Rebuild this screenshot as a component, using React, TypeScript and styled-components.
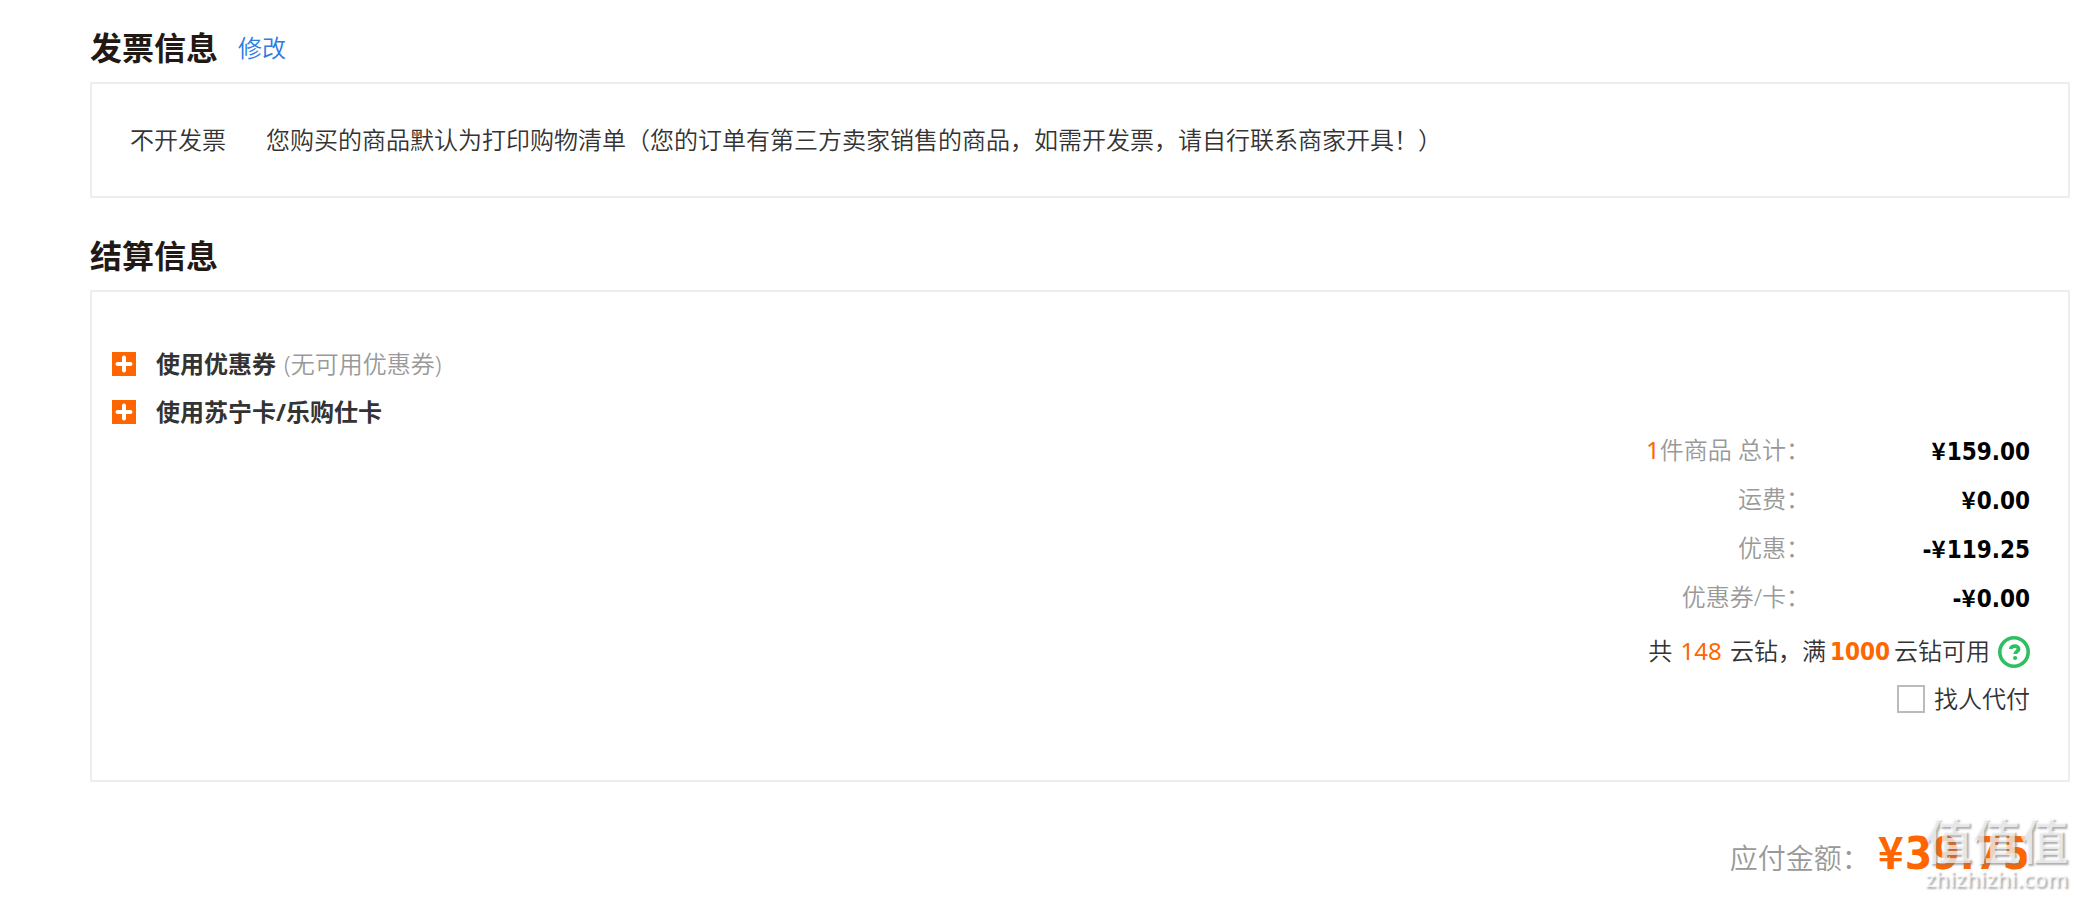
import React from "react";
import styled, { createGlobalStyle } from "styled-components";

const cjk = `"Noto Sans CJK SC", sans-serif`;
const body = `"Noto Sans", "Noto Sans CJK SC", sans-serif`;
const numeric = `"DejaVu Sans Condensed", "DejaVu Sans", "Noto Sans CJK SC", sans-serif`;

const Global = createGlobalStyle`
  *, *::before, *::after { box-sizing: border-box; }
  body {
    margin: 0;
    background: #fff;
    color: #333;
    font: 350 24px/48px ${body};
  }
`;

const Page = styled.main`
  padding: 16px 7px 0 90px;
`;

const SectionHead = styled.header`
  display: flex;
  align-items: center;
  gap: 20px;
  height: 64px;
`;

const Title = styled.h2`
  margin: 0;
  font-size: 32px;
  font-weight: 700;
  color: #221814;
`;

const EditLink = styled.a`
  color: #2e7ae6;
  text-decoration: none;
`;

const Panel = styled.section`
  border: 2px solid #ededed;
`;

const InvoicePanel = styled(Panel)`
  display: flex;
  gap: 40px;
  padding: 32px 38px;
  margin: 2px 0 26px;
`;

const SettlePanel = styled(Panel)`
  margin-top: 2px;
  padding: 48px 38px 58px 20px;
`;

const OptionRow = styled.div`
  display: flex;
  align-items: center;
  gap: 20px;
  height: 48px;
`;

const ExpandButton = styled.button`
  width: 24px;
  height: 24px;
  padding: 0;
  border: 0;
  background: #ff6600;
  cursor: pointer;

  svg { display: block; }
`;

const OptionName = styled.strong`
  font-weight: 700;
`;

const Muted = styled.span`
  margin-left: 8px;
  color: #999;
`;

const Totals = styled.dl`
  margin: -10px 0 0;
`;

const TotalRow = styled.div`
  display: flex;
  justify-content: flex-end;
  height: 49px;
`;

const TotalLabel = styled.dt`
  color: #999;
`;

const TotalValue = styled.dd`
  width: 220px;
  margin: 0;
  text-align: right;
  font-family: ${numeric};
  font-weight: 700;
  color: #000;
`;

const Yen = styled.span`
  margin-right: 1px;
  font-family: ${cjk};
  font-weight: 700;
`;

const Orange = styled.span`
  font-weight: 400;
  color: #ff6600;
`;

const Balance = styled(Orange)`
  margin: 0 2px;
`;

const Threshold = styled.strong`
  margin: 0 4px;
  font-family: ${numeric};
  font-weight: 700;
  color: #ff6600;
`;

const Points = styled.div`
  display: flex;
  justify-content: flex-end;
  align-items: center;
  gap: 8px;
  margin-top: 5px;
`;

const HelpButton = styled.button`
  width: 32px;
  height: 32px;
  padding: 0;
  border: 0;
  background: none;
  cursor: pointer;

  svg { display: block; }
`;

const PayByOther = styled.label`
  display: flex;
  justify-content: flex-end;
  align-items: center;
  gap: 9px;
  height: 46px;
`;

const Checkbox = styled.input`
  appearance: none;
  width: 28px;
  height: 28px;
  margin: 0;
  border: 2px solid #bbb;
  background: #fff;

  &:checked { background: #ff6600; }
`;

const Footer = styled.footer`
  position: relative;
  display: flex;
  justify-content: flex-end;
  align-items: baseline;
  height: 112px;
  padding: 36px 40px 0 0;
  line-height: 64px;
`;

const DueLabel = styled.span`
  font-size: 28px;
  color: #999;
`;

const DueAmount = styled.strong`
  margin-left: 8px;
  font-family: ${numeric};
  font-size: 44px;
  font-weight: 700;
  color: #ff6600;
`;

const Watermark = styled.div`
  position: absolute;
  right: 2px;
  bottom: 0;
  display: flex;
  flex-direction: column;
  align-items: flex-end;
  font-weight: 700;
  color: rgba(255, 255, 255, 0.7);
  text-shadow: 2px 2px 2px rgba(120, 120, 120, 0.6);
  pointer-events: none;
`;

const MarkName = styled.span`
  font-family: ${cjk};
  font-size: 48px;
  line-height: 48px;
`;

const MarkSite = styled.span`
  font: 600 22px/32px "Open Sans", sans-serif;
`;

const options = [
  { name: "使用优惠券", note: "(无可用优惠券)" },
  { name: "使用苏宁卡/乐购仕卡", note: "" },
];

const totals = [
  { count: "1", label: "件商品 总计：", sign: "", value: "159.00" },
  { count: "", label: "运费：", sign: "", value: "0.00" },
  { count: "", label: "优惠：", sign: "-", value: "119.25" },
  { count: "", label: "优惠券/卡：", sign: "-", value: "0.00" },
];

const PlusIcon = () => (
  <svg width="24" height="24" viewBox="0 0 24 24" aria-hidden="true">
    <path d="M12 5.5v13M5.5 12h13" stroke="#fff" strokeWidth="4" strokeLinecap="round" />
  </svg>
);

const HelpIcon = () => (
  <svg width="32" height="32" viewBox="0 0 32 32" fill="none" aria-hidden="true">
    <circle cx="16" cy="16" r="14.2" stroke="#2fbf62" strokeWidth="3.6" />
    <path
      d="M12.8 13c.2-4 8-3.8 7.8.2-.1 2.4-3.4 2.3-3.4 4.9"
      stroke="#2fbf62"
      strokeWidth="3.8"
    />
    <circle cx="17.1" cy="22" r="2.1" fill="#2fbf62" />
  </svg>
);

export default function App() {
  return (
    <>
      <Global />
      <Page>
        <SectionHead>
          <Title>发票信息</Title>
          <EditLink href="#invoice">修改</EditLink>
        </SectionHead>
        <InvoicePanel id="invoice">
          <span>不开发票</span>
          <span>您购买的商品默认为打印购物清单（您的订单有第三方卖家销售的商品，如需开发票，请自行联系商家开具！）</span>
        </InvoicePanel>

        <SectionHead>
          <Title>结算信息</Title>
        </SectionHead>
        <SettlePanel>
          {options.map((o) => (
            <OptionRow key={o.name}>
              <ExpandButton type="button" aria-label={o.name}>
                <PlusIcon />
              </ExpandButton>
              <span>
                <OptionName>{o.name}</OptionName>
                {o.note && <Muted>{o.note}</Muted>}
              </span>
            </OptionRow>
          ))}
          <Totals>
            {totals.map((t) => (
              <TotalRow key={t.label}>
                <TotalLabel>
                  {t.count && <Orange>{t.count}</Orange>}
                  {t.label}
                </TotalLabel>
                <TotalValue>
                  {t.sign}
                  <Yen>¥</Yen>
                  {t.value}
                </TotalValue>
              </TotalRow>
            ))}
          </Totals>
          <Points>
            <span>
              共 <Balance>148</Balance> 云钻，满<Threshold>1000</Threshold>云钻可用
            </span>
            <HelpButton type="button" aria-label="云钻说明">
              <HelpIcon />
            </HelpButton>
          </Points>
          <PayByOther>
            <Checkbox type="checkbox" />
            找人代付
          </PayByOther>
        </SettlePanel>

        <Footer>
          <DueLabel>应付金额：</DueLabel>
          <DueAmount>
            <Yen>¥</Yen>39.75
          </DueAmount>
          <Watermark>
            <MarkName>值值值</MarkName>
            <MarkSite>zhizhizhi.com</MarkSite>
          </Watermark>
        </Footer>
      </Page>
    </>
  );
}
